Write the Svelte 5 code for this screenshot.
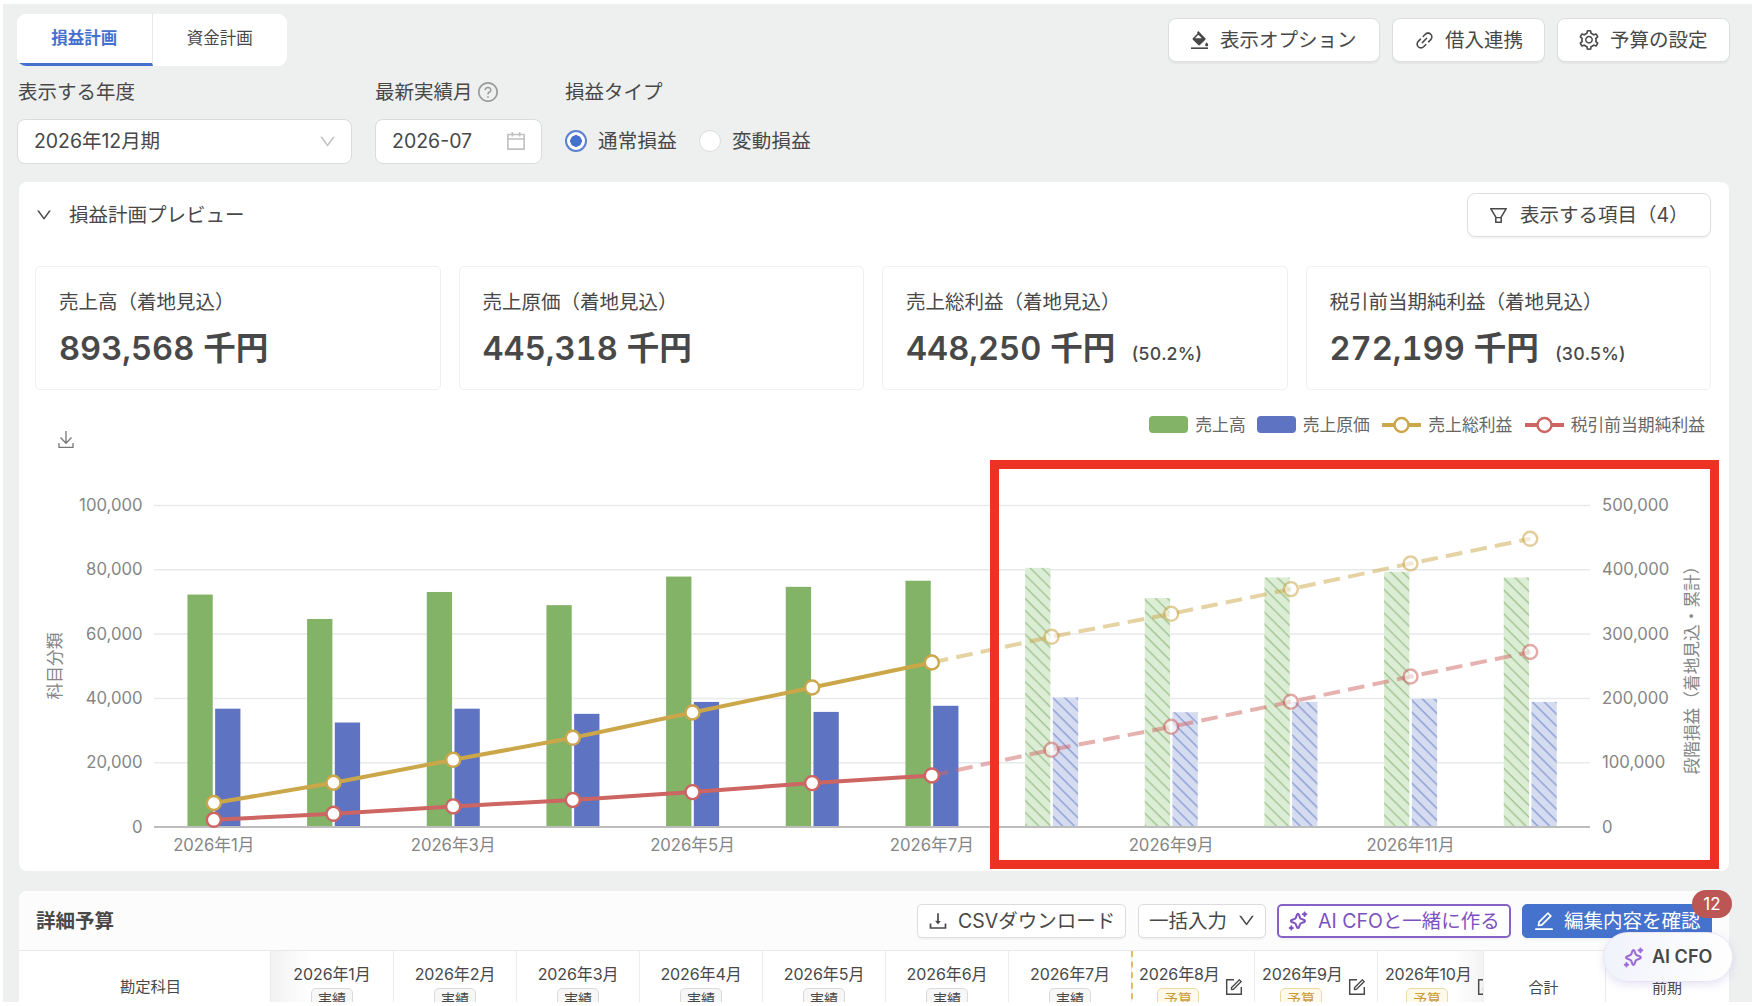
<script>
  const icons = {
    down: ['M884 256h-75c-5.1 0-9.9 2.5-12.9 6.6L512 654.2 227.9 262.6c-3-4.1-7.8-6.6-12.9-6.6h-75c-6.5 0-10.3 7.4-6.5 12.7l352.6 486.1c12.8 17.6 39 17.6 51.7 0l352.6-486.1c3.9-5.3.1-12.7-6.4-12.7z'],
    calendar: ['M880 184H712v-64c0-4.4-3.6-8-8-8h-56c-4.4 0-8 3.6-8 8v64H384v-64c0-4.4-3.6-8-8-8h-56c-4.4 0-8 3.6-8 8v64H144c-17.7 0-32 14.3-32 32v664c0 17.7 14.3 32 32 32h736c17.7 0 32-14.3 32-32V216c0-17.7-14.3-32-32-32zm-40 656H184V460h656v380zM184 392V256h128v48c0 4.4 3.6 8 8 8h56c4.4 0 8-3.6 8-8v-48h256v48c0 4.4 3.6 8 8 8h56c4.4 0 8-3.6 8-8v-48h128v136H184z'],
    filter: ['M880.1 154H143.9c-24.5 0-39.8 26.7-27.5 48L349 597.4V838c0 17.7 14.2 32 31.8 32h262.4c17.6 0 31.8-14.3 31.8-32V597.4L907.7 202c12.2-21.3-3.1-48-27.6-48zM603.4 798H420.6V642h182.9v156zm9.6-236.6l-9.5 16.6h-183l-9.5-16.6L212.7 226h598.6L613 561.4z'],
    download: ['M505.7 661a8 8 0 0012.6 0l112-141.7c4.1-5.2.4-12.9-6.3-12.9h-74.1V168c0-4.4-3.6-8-8-8h-60c-4.4 0-8 3.6-8 8v338.3H400c-6.7 0-10.4 7.7-6.3 12.9l112 141.8zM878 626h-60c-4.4 0-8 3.6-8 8v154H214V634c0-4.4-3.6-8-8-8h-60c-4.4 0-8 3.6-8 8v198c0 17.7 14.3 32 32 32h684c17.7 0 32-14.3 32-32V634c0-4.4-3.6-8-8-8z'],
    edit: ['M257.7 752c2 0 4-.2 6-.5L431.9 722c2-.4 3.9-1.3 5.3-2.8l423.9-423.9a9.96 9.96 0 000-14.1L694.9 114.9c-1.9-1.9-4.4-2.9-7.1-2.9s-5.2 1-7.1 2.9L256.8 538.8c-1.5 1.5-2.4 3.3-2.8 5.3l-29.5 168.2a33.5 33.5 0 009.4 29.8c6.6 6.4 14.9 9.9 23.8 9.9zm67.4-174.4L687.8 215l73.3 73.3-362.7 362.6-88.9 15.7 15.6-89zM880 836H144c-17.7 0-32 14.3-32 32v36c0 4.4 3.6 8 8 8h784c4.4 0 8-3.6 8-8v-36c0-17.7-14.3-32-32-32z'],
    form: [
      'M904 512h-56c-4.4 0-8 3.6-8 8v320H184V184h320c4.4 0 8-3.6 8-8v-56c0-4.4-3.6-8-8-8H144c-17.7 0-32 14.3-32 32v736c0 17.7 14.3 32 32 32h736c17.7 0 32-14.3 32-32V520c0-4.4-3.6-8-8-8z',
      'M355.9 534.9L354 653.8c-.1 8.9 7.1 16.2 16 16.2h.4l118-2.9c2-.1 4-.9 5.4-2.3l415.9-415c3.1-3.1 3.1-8.2 0-11.3L785.4 114.3c-1.6-1.6-3.6-2.3-5.7-2.3s-4.1.8-5.7 2.3l-415.8 415a8.3 8.3 0 00-2.3 5.6zm63.5 23.6L779.7 199l45.2 45.1-360.5 359.7-45.7 1.1.7-46.4z'
    ],
    question: [
      'M512 64C264.6 64 64 264.6 64 512s200.6 448 448 448 448-200.6 448-448S759.4 64 512 64zm0 820c-205.4 0-372-166.6-372-372s166.6-372 372-372 372 166.6 372 372-166.6 372-372 372z',
      'M623.6 316.7C593.6 290.4 554 276 512 276s-81.6 14.5-111.6 40.7C369.2 344 352 380.7 352 420v7.6c0 4.4 3.6 8 8 8h48c4.4 0 8-3.6 8-8V420c0-44.1 43.1-80 96-80s96 35.9 96 80c0 31.1-22 59.6-56.1 72.7-21.2 8.1-39.2 22.3-52.1 40.9-13.1 19-19.9 41.8-19.9 64.9V620c0 4.4 3.6 8 8 8h48c4.4 0 8-3.6 8-8v-22.7a48.3 48.3 0 0130.9-44.8c59-22.7 97.1-74.7 97.1-132.5.1-39.3-17.1-76-48.3-103.3zM472 732a40 40 0 1080 0 40 40 0 10-80 0z'
    ],
    link: ['M574 665.4a8.03 8.03 0 00-11.3 0L446.5 781.6c-53.8 53.8-144.6 59.5-204 0-59.5-59.5-53.8-150.2 0-204l116.2-116.2c3.1-3.1 3.1-8.2 0-11.3l-39.8-39.8a8.03 8.03 0 00-11.3 0L191.4 526.5c-84.6 84.6-84.6 221.5 0 306s221.5 84.6 306 0l116.2-116.2c3.1-3.1 3.1-8.2 0-11.3L574 665.4zm258.6-474c-84.6-84.6-221.5-84.6-306 0L410.3 307.6a8.03 8.03 0 000 11.3l39.7 39.7c3.1 3.1 8.2 3.1 11.3 0l116.2-116.2c53.8-53.8 144.6-59.5 204 0 59.5 59.5 53.8 150.2 0 204L665.3 562.6a8.03 8.03 0 000 11.3l39.8 39.8c3.1 3.1 8.2 3.1 11.3 0l116.2-116.2c84.5-84.6 84.5-221.5 0-306.1zM610.1 372.3a8.03 8.03 0 00-11.3 0L372.3 598.7a8.03 8.03 0 000 11.3l39.6 39.6c3.1 3.1 8.2 3.1 11.3 0l226.4-226.4c3.1-3.1 3.1-8.2 0-11.3l-39.5-39.6z'],
    setting: ['M924.8 625.7l-65.5-56c3.1-19 4.7-38.4 4.7-57.8s-1.6-38.8-4.7-57.8l65.5-56a32.03 32.03 0 009.3-35.2l-.9-2.6a443.74 443.74 0 00-79.7-137.9l-1.8-2.1a32.12 32.12 0 00-35.1-9.5l-81.3 28.9c-30-24.6-63.5-44-99.7-57.6l-15.7-85a32.05 32.05 0 00-25.8-25.7l-2.7-.5c-52.1-9.4-106.9-9.4-159 0l-2.7.5a32.05 32.05 0 00-25.8 25.7l-15.8 85.4a351.86 351.86 0 00-99 57.4l-81.9-29.1a32 32 0 00-35.1 9.5l-1.8 2.1a446.02 446.02 0 00-79.7 137.9l-.9 2.6c-4.5 12.5-.8 26.5 9.3 35.2l66.3 56.6c-3.1 18.8-4.6 38-4.6 57.1 0 19.2 1.5 38.4 4.6 57.1L99 625.5a32.03 32.03 0 00-9.3 35.2l.9 2.6c18.1 50.4 44.9 96.9 79.7 137.9l1.8 2.1a32.12 32.12 0 0035.1 9.5l81.9-29.1c29.8 24.5 63.1 43.9 99 57.4l15.8 85.4a32.05 32.05 0 0025.8 25.7l2.7.5a449.4 449.4 0 00159 0l2.7-.5a32.05 32.05 0 0025.8-25.7l15.7-85a350 350 0 0099.7-57.6l81.3 28.9a32 32 0 0035.1-9.5l1.8-2.1c34.8-41.1 61.6-87.5 79.7-137.9l.9-2.6c4.5-12.3.8-26.3-9.3-35zM788.3 465.9c2.5 15.1 3.8 30.6 3.8 46.1s-1.3 31-3.8 46.1l-6.6 40.1 74.7 63.9a370.03 370.03 0 01-42.6 73.6L721 702.8l-31.4 25.8c-23.9 19.6-50.5 35-79.3 45.8l-38.1 14.3-17.9 97a377.5 377.5 0 01-85 0l-17.9-97.2-37.8-14.5c-28.5-10.8-55-26.2-78.7-45.7l-31.4-25.9-93.4 33.2c-17-22.9-31.2-47.6-42.6-73.6l75.5-64.5-6.5-40c-2.4-14.9-3.7-30.3-3.7-45.5 0-15.3 1.2-30.6 3.7-45.5l6.5-40-75.5-64.5c11.3-26.1 25.6-50.7 42.6-73.6l93.4 33.2 31.4-25.9c23.7-19.5 50.2-34.9 78.7-45.7l37.9-14.3 17.9-97.2c28.1-3.2 56.8-3.2 85 0l17.9 97 38.1 14.3c28.7 10.8 55.4 26.2 79.3 45.8l31.4 25.8 92.8-32.9c17 22.9 31.2 47.6 42.6 73.6L781.8 426l6.5 39.9zM512 326c-97.2 0-176 78.8-176 176s78.8 176 176 176 176-78.8 176-176-78.8-176-176-176zm79.2 255.2A111.6 111.6 0 01512 614c-29.9 0-58-11.7-79.2-32.8A111.6 111.6 0 01400 502c0-29.9 11.7-58 32.8-79.2C454 401.6 482.1 390 512 390c29.9 0 58 11.6 79.2 32.8A111.6 111.6 0 01624 502c0 29.9-11.7 58-32.8 79.2z'],
    bucket: [
      'M110 836h804v76H110z',
      'M400 120l56-52 330 332c22 22 22 50 0 72L534 730c-24 24-56 24-80 0L200 478c-24-24-24-54 0-78l216-214zM460 236L300 400h322z',
      'M850 600s-72 82-72 126c0 40 32 70 72 70s72-30 72-70c0-44-72-126-72-126z'
    ]
  };

  const stats = [
    { label: '売上高（着地見込）', value: '893,568', rate: '' },
    { label: '売上原価（着地見込）', value: '445,318', rate: '' },
    { label: '売上総利益（着地見込）', value: '448,250', rate: '(50.2%)' },
    { label: '税引前当期純利益（着地見込）', value: '272,199', rate: '(30.5%)' }
  ];

  // Plot geometry
  const left = 154, right = 1590, top = 505.5, base = 827;
  const step = (right - left) / 12;
  const cx = (i) => left + step * (i + 0.5);
  const y = (v) => base - (v / 100000) * (base - top);
  const y2 = (v) => y(v / 5);

  const sales = [72300, 64700, 73100, 69000, 77900, 74700, 76600, 80600, 71200, 77600, 79400, 77600];
  const costs = [36800, 32500, 36800, 35200, 38900, 35800, 37700, 40300, 35700, 38900, 39900, 38900];
  const gross = [37300, 68800, 104500, 138700, 178100, 217000, 255800, 295800, 331600, 370000, 409800, 448250];
  const net = [11200, 20500, 32000, 42000, 54300, 68300, 80200, 120100, 155800, 194700, 234000, 272199];
  const pts = (d, a, b) => d.slice(a, b).map((v, i) => `${cx(a + i)},${y2(v)}`).join(' ');
  const lines = [
    { cls: 'gold', data: gross },
    { cls: 'red', data: net }
  ];
  const ticks = [0, 1, 2, 3, 4, 5];
  const oddMonths = [1, 3, 5, 7, 9, 11];
  const actual = [1, 2, 3, 4, 5, 6, 7];
  const budget = [8, 9, 10];
</script>

{#snippet icon(name, size)}
  <svg class="icon" viewBox="64 64 896 896" width={size} height={size}>
    {#each icons[name] as d}<path {d} fill="currentColor" fill-rule="evenodd" />{/each}
  </svg>
{/snippet}

{#snippet sparkle(size)}
  <svg class="icon" viewBox="0 0 20 20" width={size} height={size} fill="none" stroke="currentColor" stroke-width="2" stroke-linejoin="round" stroke-linecap="round">
    <path d="M10 2.8c.5 0 .7.4.9.9l1.1 3c.2.6.6 1 1.2 1.2l3 1.1c1 .4 1 1.6 0 2l-3 1.1c-.6.2-1 .6-1.2 1.2l-1.1 3c-.4 1-1.5 1-1.9 0l-1.1-3c-.2-.6-.6-1-1.2-1.2l-3-1.1c-1-.4-1-1.6 0-2l3-1.1c.6-.2 1-.6 1.2-1.2l1.1-3c.2-.5.5-.9 1-.9z" />
    <path d="M16.6 1.4v3.6M14.8 3.2h3.6M3.3 15.3v3.2M1.7 16.9h3.2" />
  </svg>
{/snippet}

<div class="page">
  <header class="top">
    <nav class="tabs">
      <div class="tab active">損益計画</div>
      <div class="tab">資金計画</div>
    </nav>
    <div class="actions">
      <button class="btn opt">{@render icon('bucket', 19)}<span>表示オプション</span></button>
      <button class="btn loan">{@render icon('link', 19)}<span>借入連携</span></button>
      <button class="btn conf">{@render icon('setting', 20)}<span>予算の設定</span></button>
    </div>
  </header>

  <section class="filters">
    <div class="field year">
      <div class="label">表示する年度</div>
      <div class="input"><span>2026年12月期</span><i class="muted">{@render icon('down', 17)}</i></div>
    </div>
    <div class="field month">
      <div class="label">最新実績月<i class="help">{@render icon('question', 20)}</i></div>
      <div class="input"><span class="date">2026-07</span><i class="muted">{@render icon('calendar', 20)}</i></div>
    </div>
    <div class="field">
      <div class="label">損益タイプ</div>
      <div class="radios">
        <span class="radio on"></span><span class="rtext">通常損益</span>
        <span class="radio"></span><span class="rtext">変動損益</span>
      </div>
    </div>
  </section>

  <section class="card preview">
    <div class="card-head">
      <i class="fold">{@render icon('down', 16)}</i>
      <span class="card-title">損益計画プレビュー</span>
      <button class="btn items">{@render icon('filter', 19)}<span>表示する項目（4）</span></button>
    </div>
    <div class="stats">
      {#each stats as s}
        <div class="stat">
          <div class="stat-label">{s.label}</div>
          <div class="stat-value"><b>{s.value}</b><b class="unit">千円</b>{#if s.rate}<small>{s.rate}</small>{/if}</div>
        </div>
      {/each}
    </div>
    <div class="chart-bar">
      <svg class="save" viewBox="0 0 16 18" width="16" height="18" fill="none" stroke="#777" stroke-width="1.3">
        <path d="M8 0v12M2.5 6.5L8 12.3l5.5-5.8M1 12v4.3h14V12" />
      </svg>
      <div class="legend">
        <i class="sw green"></i><span class="l1">売上高</span>
        <i class="sw blue"></i><span class="l2">売上原価</span>
        <svg width="39" height="18"><path class="line gold" d="M0 9h39" /><circle class="mark gold" cx="19.5" cy="9" r="7" /></svg><span class="l3">売上総利益</span>
        <svg width="39" height="18"><path class="line red" d="M0 9h39" /><circle class="mark red" cx="19.5" cy="9" r="7" /></svg><span>税引前当期純利益</span>
      </div>
    </div>
    <svg class="chart" viewBox="19 446 1710 425" width="1710" height="425">
      <defs>
        <pattern id="hatch-green" width="8.4" height="8.4" patternUnits="userSpaceOnUse" patternTransform="rotate(45)">
          <rect width="8.4" height="8.4" fill="#dcedd6" /><rect width="8.4" height="1.4" fill="#a2c493" />
        </pattern>
        <pattern id="hatch-blue" width="8.4" height="8.4" patternUnits="userSpaceOnUse" patternTransform="rotate(45)">
          <rect width="8.4" height="8.4" fill="#d6dcf0" /><rect width="8.4" height="1.5" fill="#8fa2d6" />
        </pattern>
      </defs>
      {#each ticks as t}
        {#if t > 0}<path class="grid" d="M{left} {y(t * 20000)}H{right}" />{/if}
        <text class="tick" x="142.5" y={y(t * 20000) + 5.5} text-anchor="end">{(t * 20000).toLocaleString('en-US')}</text>
        <text class="tick" x="1602" y={y(t * 20000) + 5.5}>{(t * 100000).toLocaleString('en-US')}</text>
      {/each}
      {#each sales as v, i}
        <rect x={cx(i) - 26.4} y={y(v)} width="25.3" height={base - y(v)} fill={i < 7 ? '#82b366' : 'url(#hatch-green)'} />
        <rect x={cx(i) + 1.3} y={y(costs[i])} width="25.3" height={base - y(costs[i])} fill={i < 7 ? '#5e74c2' : 'url(#hatch-blue)'} />
      {/each}
      <path class="axis" d="M{left} {base}H{right}" />
      {#each lines as l}
        <polyline class="line {l.cls}" points={pts(l.data, 0, 7)} />
        <polyline class="line dashed {l.cls}" points={pts(l.data, 6, 12)} />
        {#each l.data as v, i}
          <circle class="mark {l.cls}" class:future={i > 6} cx={cx(i)} cy={y2(v)} r="7" />
        {/each}
      {/each}
      {#each oddMonths as m}
        <text class="tick" x={cx(m - 1)} y="851.3" text-anchor="middle">2026年{m}月</text>
      {/each}
      <text class="tick" transform="translate(60.5 666) rotate(-90)" text-anchor="middle">科目分類</text>
      <text class="tick" transform="translate(1697.5 666) rotate(-90)" text-anchor="middle">段階損益（着地見込・累計）</text>
    </svg>
    <div class="highlight"></div>
  </section>

  <section class="card detail">
    <div class="detail-head">
      <h2>詳細予算</h2>
      <button class="small csv">{@render icon('download', 20)}<span>CSVダウンロード</span></button>
      <button class="small bulk"><span>一括入力</span>{@render icon('down', 17)}</button>
      <button class="small ai">{@render sparkle(20)}<span>AI CFOと一緒に作る</span></button>
      <button class="small confirm">{@render icon('edit', 20)}<span>編集内容を確認</span></button>
    </div>
    <div class="table">
      <div class="cell account">勘定科目</div>
      {#each actual as m}
        <div class="cell m" class:first={m === 1}><span>2026年{m}月</span><em>実績</em></div>
      {/each}
      {#each budget as m}
        <div class="cell b" class:start={m === 8} class:last={m === 10}>
          <div class="stack"><span>2026年{m}月</span><em class="plan">予算</em></div>
          {@render icon('form', 18)}
        </div>
      {/each}
      <div class="cell total">合計</div>
      <div class="cell prev">前期</div>
    </div>
    <div class="count">12</div>
    <div class="assistant">{@render sparkle(21)}<span>AI CFO</span></div>
  </section>
</div>

<style>
  :global(body) { margin: 0; background: #fff; overflow: hidden; }
  * { box-sizing: border-box; }
  .page {
    width: 1749px; height: 998px; margin: 4px 0 4px 3px; padding: 10px 23px 0 14px;
    background: #eef0ef; color: #484848; overflow: hidden;
    font: 19.5px/28px Inter, "Noto Sans CJK JP", sans-serif;
  }
  i, em { font-style: normal; }
  .icon { display: block; flex: none; }
  button { font: inherit; color: inherit; padding: 0; white-space: nowrap; }

  .top { display: flex; justify-content: space-between; height: 52px; }
  .tabs { display: flex; width: 270px; height: 52px; background: #fff; border-radius: 9px; overflow: hidden; }
  .tab { flex: 1; height: 52px; font-size: 16.5px; line-height: 48px; text-align: center; }
  .tab.active { color: #4571cd; font-weight: 700; border-bottom: 3px solid #4571cd; border-right: 1px solid #e8eaea; }
  .actions { display: flex; gap: 12px; padding-top: 4px; margin-right: -1px; }
  .btn { display: flex; align-items: center; height: 44px; gap: 11px; background: #fff; border: 1.5px solid #dcdedd; border-radius: 8px; box-shadow: 0 2px 1px #0000000a; }
  .opt { width: 212px; padding-left: 21px; }
  .loan { width: 153px; padding-left: 22px; }
  .conf { width: 173px; padding-left: 21px; }

  .filters { display: flex; height: 116px; padding-top: 12px; }
  .label { display: flex; align-items: center; height: 28px; }
  .year .label { padding-left: 1px; }
  .help { margin-left: 5px; color: #999; }
  .input { display: flex; align-items: center; justify-content: space-between; height: 45px; margin-top: 13px; padding: 0 15px 1px 16px; background: #fff; border: 1.5px solid #dadcdb; border-radius: 8px; }
  .year { width: 335px; margin-right: 23px; }
  .year .input { letter-spacing: -.05px; }
  .month { width: 167px; margin-right: 23px; }
  .muted { color: #c0c0c0; }
  .radios { display: flex; align-items: center; height: 45px; margin-top: 12px; }
  .radio { width: 22px; height: 22px; border: 1.5px solid #dcdcdc; border-radius: 50%; background: #fff; }
  .radio.on { border: 2px solid #5a80d2; background: radial-gradient(circle, #4571cd 5.5px, #fff 6px); }
  .rtext { width: 78px; margin: 0 23px 0 11px; white-space: nowrap; letter-spacing: .25px; }

  .card { position: relative; width: 1710px; margin-left: 2px; background: #fff; border-radius: 8px; }
  .preview { height: 689px; }
  .card-head { display: flex; align-items: center; height: 66px; padding: 0 18px 0 17px; }
  .card-title { margin-left: 17px; }
  .items { width: 244px; margin-left: auto; padding-left: 21px; gap: 12px; }
  .stats { display: grid; grid-template-columns: repeat(4, 1fr); gap: 18px; margin: 18px 18px 0 16px; }
  .stat { height: 124px; padding: 21px 23px 0; border: 1.5px solid #f0f0f0; border-radius: 5px; }
  .stat-label { height: 28px; white-space: nowrap; }
  .stat-value { display: flex; align-items: baseline; height: 56px; line-height: 56px; margin-top: 4px; font-variant-numeric: tabular-nums; }
  .stat-value b { font-size: 32.6px; font-weight: 600; }
  .stat-value .unit { margin-left: 9px; }
  .stat-value small { margin-left: 16px; font-size: 17.8px; font-weight: 500; }

  .chart-bar { display: flex; justify-content: space-between; height: 56px; padding: 22px 24px 0 39px; }
  .save { margin-top: 19px; }
  .legend { display: flex; align-items: center; height: 25px; font-size: 16.8px; color: #666; }
  .legend span { margin-left: 7px; white-space: nowrap; }
  .legend .l1 { margin-right: 11px; }
  .legend .l2, .legend .l3 { margin-right: 12.5px; }
  .sw { width: 39px; height: 17px; border-radius: 4px; }
  .green { background: #82b366; }
  .blue { background: #5e74c2; }
  .chart { display: block; }
  .grid { stroke: #e8e9ec; stroke-width: 1.5; }
  .axis { stroke: #bdbdbd; stroke-width: 2; }
  .tick { font-size: 16.7px; fill: #858585; }
  .line { fill: none; stroke-width: 4; }
  .dashed { stroke-dasharray: 16.7 8.3; opacity: .5; }
  .line.gold, .mark.gold { stroke: #cba74a; }
  .line.red, .mark.red { stroke: #cd6562; }
  .mark { fill: #fff; stroke-width: 2.4; }
  .mark.future { opacity: .55; }
  .highlight { position: absolute; left: 971px; top: 278px; width: 729px; height: 409px; border: 9px solid #ec3323; }

  .detail { height: 140px; margin-top: 20px; }
  .detail-head { display: flex; align-items: center; height: 60px; padding: 0 17px 0 17px; background: #fcfcfc; border-radius: 8px 8px 0 0; border-bottom: 1.5px solid #e9e9e9; }
  h2 { margin: 0 auto 0 0; font-size: 19.5px; font-weight: 700; }
  .small { display: flex; align-items: center; height: 34px; background: #fff; border: 1.5px solid #dcdcdc; border-radius: 5px; box-shadow: 0 2px 1px #0000000a; }
  .csv { width: 209px; padding-left: 10px; gap: 10px; margin-right: 12px; }
  .bulk { width: 128px; padding-left: 10px; gap: 11px; margin-right: 11px; }
  .ai { width: 234px; padding-left: 9px; gap: 10px; margin-right: 11px; color: #7d52c0; border: 2px solid #8861c8; }
  .confirm { width: 190px; padding-left: 11px; gap: 10px; color: #fff; background: #4472cc; border-color: #4472cc; border-radius: 5px 0 0 5px; }
  .table { display: flex; height: 51px; overflow: hidden; font-size: 16px; }
  .cell { flex: none; height: 80px; padding-top: 9px; border-right: 1.5px solid #ececec; line-height: 28px; text-align: center; }
  .cell span { display: block; white-space: nowrap; }
  .cell em { display: block; width: 42px; height: 30px; margin: 0 auto; line-height: 19px; font-size: 14px; background: #f7f7f7; border: 1.5px solid #dadada; border-radius: 5px; }
  .cell em.plan { color: #c99a3c; background: #fef9e8; border-color: #ecd9a4; }
  .account { width: 252px; padding: 22px 0 0 12px; font-size: 15.3px; }
  .m { width: 123px; letter-spacing: -.1px; }
  .first { background: linear-gradient(90deg, #f2f2f2, #fff 42px); }
  .b { display: flex; width: 123px; padding-left: 7px; gap: 8px; overflow: hidden; letter-spacing: -.1px; }
  .b > :global(.icon) { margin-top: 18px; }
  .stack { width: 78px; flex: none; }
  .start { border-left: 2px dashed #e0bd68; margin-left: -1px; width: 124px; padding-left: 6px; }
  .last { width: 106px; background: linear-gradient(90deg, #fff 76px, #f3f3f3); }
  .last .stack { width: 84px; letter-spacing: -.2px; }
  .total { width: 122px; padding-top: 23px; padding-right: 2px; font-size: 15px; }
  .prev { width: 124px; padding-top: 23px; padding-right: 2px; font-size: 15px; border-right: 0; }
  .count { position: absolute; left: 1673px; top: -1px; width: 40px; height: 28px; border-radius: 14px; background: #bb5654; color: #fff; font-size: 17px; line-height: 28px; text-align: center; }
  .assistant { position: absolute; left: 1584px; top: 41px; display: flex; align-items: center; gap: 8px; width: 130px; height: 50px; padding-left: 19px; border: 1px solid #e8e4f6; border-radius: 25px; background: linear-gradient(90deg, #f1f3fb, #fff); box-shadow: 0 3px 9px #7d6ac82e; font-size: 18px; font-weight: 600; white-space: nowrap; }
  .assistant :global(.icon) { color: #9d6bd8; }
</style>
